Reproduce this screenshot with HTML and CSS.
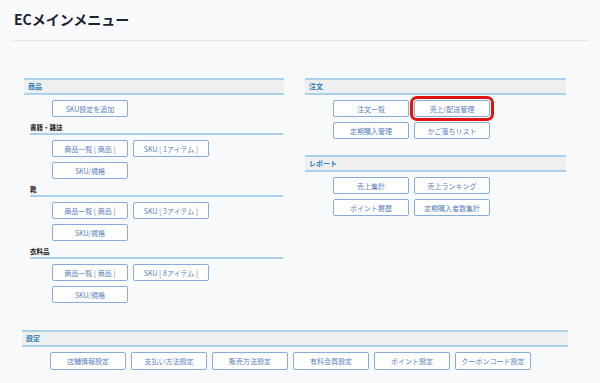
FILE: index.html
```html
<!DOCTYPE html>
<html lang="ja">
<head>
    <meta charset="UTF-8">
    <meta name="viewport" content="width=device-width, initial-scale=1.0">
    <title>ECメインメニュー</title>

    <link rel="stylesheet" href="styles.css">
</head>
<body>
    <div class="page-head">
        <h1>ECメインメニュー</h1>
    </div>

    <div class="menu">
        <div class="columns">
            <div class="col col-left">
                <div class="section-head">商品</div>
                <div class="btn-grid">
                    <button class="btn">SKU設定を追加</button>
                </div>

                <div class="sub-head">書籍・雑誌</div>
                <div class="btn-grid">
                    <button class="btn">商品一覧 [ 商品 ]</button>
                    <button class="btn">SKU [ 1アイテム ]</button>
                    <button class="btn">SKU/規格</button>
                </div>

                <div class="sub-head">靴</div>
                <div class="btn-grid">
                    <button class="btn">商品一覧 [ 商品 ]</button>
                    <button class="btn">SKU [ 3アイテム ]</button>
                    <button class="btn">SKU/規格</button>
                </div>

                <div class="sub-head">衣料品</div>
                <div class="btn-grid">
                    <button class="btn">商品一覧 [ 商品 ]</button>
                    <button class="btn">SKU [ 8アイテム ]</button>
                    <button class="btn">SKU/規格</button>
                </div>
            </div>

            <div class="col col-right">
                <div class="section-head">注文</div>
                <div class="btn-grid">
                    <button class="btn">注文一覧</button>
                    <button class="btn active">売上/配送管理</button>
                    <button class="btn">定期購入管理</button>
                    <button class="btn">かご落ちリスト</button>
                </div>

                <div class="section-head report">レポート</div>
                <div class="btn-grid">
                    <button class="btn">売上集計</button>
                    <button class="btn">売上ランキング</button>
                    <button class="btn">ポイント履歴</button>
                    <button class="btn">定期購入者数集計</button>
                </div>
            </div>
        </div>

        <div class="settings">
            <div class="section-head">設定</div>
            <div class="btn-row">
                <button class="btn">店舗情報設定</button>
                <button class="btn">支払い方法設定</button>
                <button class="btn">販売方法設定</button>
                <button class="btn">有料会員設定</button>
                <button class="btn">ポイント設定</button>
                <button class="btn">クーポンコード設定</button>
            </div>
        </div>
    </div>
</body>
</html>
```

FILE: styles.css
```css
body {
    font-family: "Noto Sans CJK JP", "Noto Sans", sans-serif;
    background-color: #f8f9fb;
    margin: 0;
    padding: 0;
}

.page-head {
    margin: 0 12px 0 13px;
    height: 40px;
    border-bottom: 1px solid #e3e6ee;
}

.page-head h1 {
    margin: 0;
    padding: 9px 0 0 1px;
    font-size: 14px;
    line-height: 20px;
    font-weight: bold;
    color: #1c2233;
}

.menu {
    margin: 37px 0 0 22px;
    width: 546px;
}

.columns {
    display: flex;
    gap: 21px;
}

.col-left {
    width: 260px;
    margin-left: 2px;
}

.col-right {
    width: 261px;
}

.section-head {
    height: 13px;
    line-height: 13px;
    background-color: #efefef;
    border-top: 2px solid #a9d1ea;
    border-bottom: 2px solid #a9d1ea;
    padding-left: 4px;
    font-size: 7px;
    font-weight: bold;
    color: #2d7cb8;
}

.section-head.report {
    margin-top: 16px;
}

.sub-head {
    margin: 4px 1px 0 6px;
    height: 12px;
    line-height: 12px;
    border-bottom: 2px solid #a9d1ea;
    font-size: 6.5px;
    font-weight: bold;
    color: #222;
}

.btn-grid {
    display: grid;
    grid-template-columns: 76px 76px;
    grid-auto-rows: 17px;
    gap: 5px;
    padding: 5px 0 0 28px;
}

.btn-row {
    display: flex;
    gap: 5px;
    padding: 5px 0 0 28px;
}

.btn-row .btn {
    width: 76px;
    height: 18px;
}

.btn {
    box-sizing: border-box;
    background-color: #fff;
    border: 1px solid #88abd7;
    border-radius: 2px;
    padding: 0;
    font-family: "Noto Sans CJK JP", "Noto Sans", sans-serif;
    font-size: 7px;
    color: #5a7fba;
    cursor: pointer;
}

.btn.active {
    outline: 3px solid #e0140e;
    outline-offset: 1px;
    border-radius: 3px;
}

.settings {
    margin-top: 27px;
}
```
